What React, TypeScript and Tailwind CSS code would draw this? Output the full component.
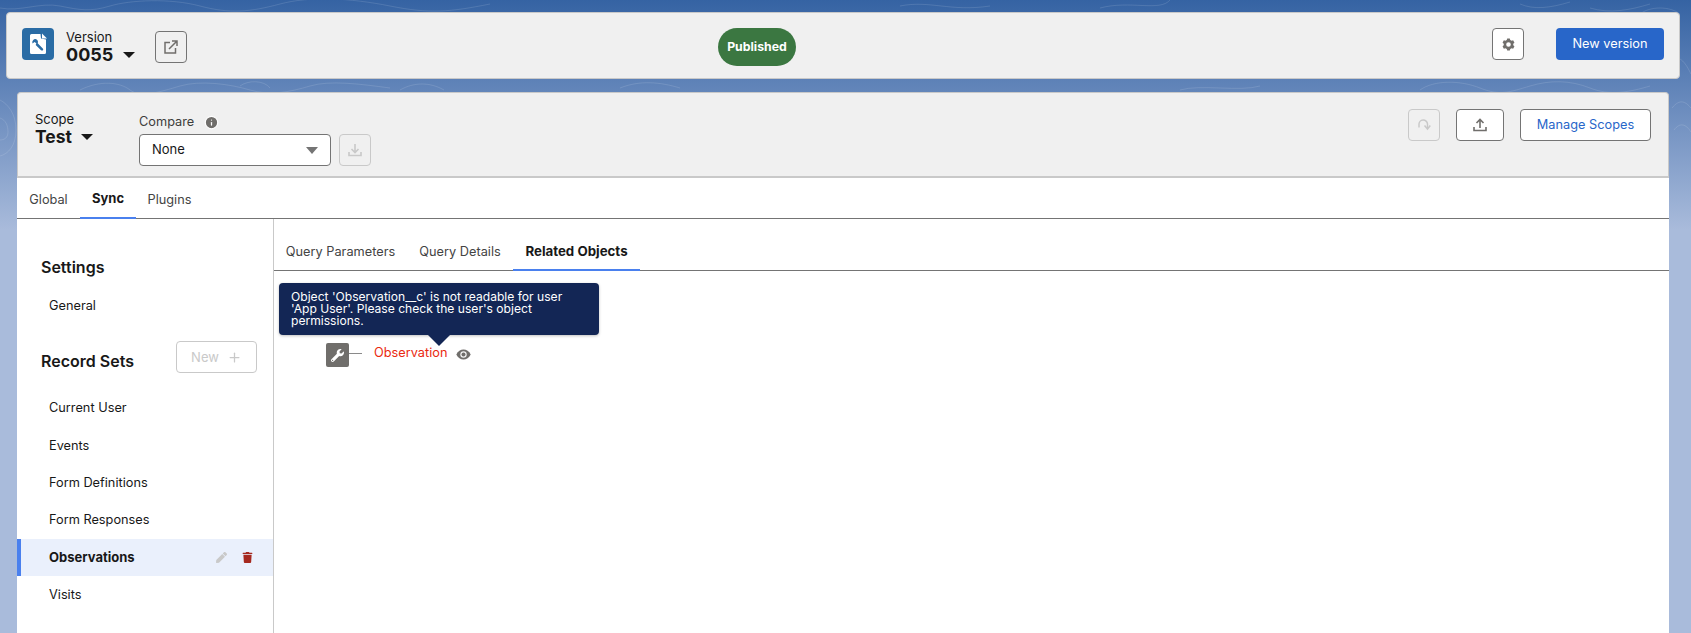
import React from "react";
import { Plus, Info } from "lucide-react";
import { FaWrench, FaPen, FaTrash } from "react-icons/fa";

const Caret = ({ c = "border-t-[#181818]", w = "border-x-[6px] border-t-[6px]" }: { c?: string; w?: string }) => (
  <span className={`inline-block w-0 h-0 border-x-transparent ${w} ${c}`} />
);

const Contours = () => (
  <svg className="absolute inset-0 pointer-events-none" width="1691" height="300" fill="none" stroke="#ffffff" strokeOpacity="0.12" strokeWidth="1">
    <path d="M0 8c20 4 40-6 60-2s30 6 50 0 60-8 90 0 50 6 80-2 70-6 110 2 60 6 100-2" />
    <path d="M80 90c20-10 40-8 50 0s30 2 50-4 50-2 70 4 40 2 60-4 50-2 80 2" />
    <path d="M240 86c8-6 24-6 30 2M400 90c14-8 30-8 44 0M620 88c20-8 40-6 60 0" />
    <path d="M1420 90c14-10 40-10 60-2s30 4 50-2 40-6 60 2 40 4 60-2" />
    <path d="M1520 4c14 6 30 4 50-2M1590 8c20 6 40 2 60-4M1640 14c10-8 30-8 40 0" />
    <path d="M1672 60c8-6 14 4 19 14M1672 108c8-10 14-6 19 0M1674 130c6-8 12-6 17 2" />
    <path d="M0 100c8 4 16 14 16 30s-8 24-16 26M0 118c6 2 8 8 8 14s-4 8-8 8" />
    <path d="M1100 8c30-8 60 4 70-8M1180 90c20-6 60 2 80-4M900 6c30-6 50 6 90 0" />
  </svg>
);

const GearIcon = () => (
  <svg width="13" height="13" viewBox="0 0 14 14">
    <path fillRule="evenodd" fill="#706e6b" d="M5.600 0.500H8.400L8.900 2.200L10.300 3L12 2.500L13.400 5L12.100 6.200V7.800L13.400 9L12 11.500L10.300 11L8.900 11.800L8.400 13.500H5.600L5.100 11.800L3.700 11L2 11.500L0.600 9L1.900 7.800V6.200L0.600 5L2 2.500L3.700 3L5.100 2.200ZM7 4.500A2.500 2.500 0 1 0 7 9.500A2.500 2.500 0 1 0 7 4.500Z" />
  </svg>
);

const RedoIcon = () => (
  <svg width="14" height="14" viewBox="0 0 14 14" fill="none" stroke="#c9c9c9" strokeWidth="1.500">
    <path d="M2 9.500V6.500A4 4 0 0 1 10.500 6V10" />
    <path d="M7.500 7.500L10.500 11L13.300 7.500" />
  </svg>
);

const TrayArrow = ({ color, up }: { color: string; up: boolean }) => (
  <svg width="14" height="14" viewBox="0 0 14 14" fill="none" stroke={color} strokeWidth="1.600">
    <path d="M1 9V12.500H13V9" />
    {up ? <path d="M7 10V1.500M3.500 5L7 1.500L10.500 5" /> : <path d="M7 1V9.500M3.500 6L7 9.500L10.500 6" />}
  </svg>
);

const OpenIcon = () => (
  <svg width="14" height="14" viewBox="0 0 14 14" fill="none" stroke="#706e6b" strokeWidth="1.500">
    <path d="M6 2.500H1V13H11.500V8" />
    <path d="M5 9L12.500 1.500M8 1H13V6" />
  </svg>
);

const EyeIcon = () => (
  <svg width="15" height="11" viewBox="0 0 15 11" className="ml-[9px] mt-[6px]">
    <path d="M0.300 5.500C2 2 4.500 0.500 7.500 0.500S13 2 14.700 5.500C13 9 10.500 10.500 7.500 10.500S2 9 0.300 5.500Z" fill="#706e6b" />
    <circle cx="7.500" cy="5.500" r="3.200" fill="#f3f3f3" />
    <circle cx="7.500" cy="5.500" r="2" fill="#706e6b" />
  </svg>
);

const rows = ["Current User", "Events", "Form Definitions", "Form Responses", "Observations", "Visits"];

export default function App() {
  return (
    <div className="relative h-[633px] w-[1691px] overflow-hidden bg-gradient-to-b from-[#3563a3] to-[#a9bbdb] bg-[length:100%_230px] bg-no-repeat [background-color:#a9bbdb] text-[#181818] [font-family:Inter,'Liberation_Sans',sans-serif]">
      <Contours />
      <div className="relative flex flex-col pt-[12px]">
        {/* Header card */}
        <header className="ml-[6px] flex h-[67px] w-[1674px] items-start rounded-[4px] border border-[#c9c9c9] bg-[#f0f0f0] pt-[15px]">
          <div className="ml-[15px] flex h-8 w-8 items-center justify-center rounded-[4px] bg-[#2a6ca5]">
            <svg width="24" height="24" viewBox="0 0 24 24">
              <path d="M4 3.500A1.500 1.500 0 0 1 5.500 2H14.500L15 6.500L20 7.500V20.500A1.500 1.500 0 0 1 18.500 22H5.500A1.500 1.500 0 0 1 4 20.500Z" fill="#fff" />
              <path d="M16 1.500L21 6.500H16Z" fill="#fff" />
              <path d="M10.200 7.200A3.200 3.200 0 0 0 6.500 11.500L8.500 10L10.300 11.300L9.700 13.100L15 18.200C16.400 19.400 18 17.800 16.800 16.400L11.700 11.200A3.200 3.200 0 0 0 10.200 7.200Z" fill="#2a6ca5" />
            </svg>
          </div>
          <div className="ml-3 flex w-[89px] flex-col">
            <span className="text-[13px] leading-[16px] mt-[1px]">Version</span>
            <span className="flex items-center gap-[10px] text-[18px] font-bold leading-[19px]">
              0055 <Caret />
            </span>
          </div>
          <button className="mt-[3px] flex h-8 w-8 items-center justify-center rounded-[4px] border border-[#747474] bg-[#f0f0f0]">
            <OpenIcon />
          </button>
          <div className="ml-[531px] mt-0 flex h-[38px] w-[78px] items-center justify-center rounded-full bg-[#3b7741] text-[12.3px] font-bold text-white">
            Published
          </div>
          <button className="ml-[696px] flex h-8 w-8 items-center justify-center rounded-[4px] border border-[#747474] bg-white">
            <GearIcon />
          </button>
          <button className="ml-8 flex h-8 w-[108px] items-center justify-center rounded-[4px] bg-[#2866c9] text-[12.75px] text-white">
            New version
          </button>
        </header>

        {/* Scope card */}
        <section className="ml-[17px] mt-[13px] flex h-[86px] w-[1652px] items-start rounded-t-[4px] border border-[#c9c9c9] border-b-2 bg-[#f0f0f0]">
          <div className="ml-[17px] mt-[18px] flex w-[104px] flex-col">
            <span className="text-[13px] leading-[16px]">Scope</span>
            <span className="flex items-center gap-[9px] text-[17.5px] font-bold leading-[19px]">
              Test <Caret />
            </span>
          </div>
          <div className="mt-[21px] flex flex-col">
            <span className="flex items-center gap-[10px] text-[12.75px] leading-[16px] text-[#3e3e3c]">
              Compare <Info size={15} color="#fff" fill="#706e6b" />
            </span>
            <div className="mt-1 flex items-center gap-2">
              <div className="flex h-8 w-[192px] items-center justify-between rounded-[4px] border border-[#747474] bg-white pl-3 pr-3 text-[13px]">
                None <Caret c="border-t-[#747474]" w="border-x-[6px] border-t-[7px]" />
              </div>
              <button className="flex h-8 w-8 items-center justify-center rounded-[4px] border border-[#c9c9c9]">
                <TrayArrow color="#c9c9c9" up={false} />
              </button>
            </div>
          </div>
          <div className="ml-auto mr-[17px] mt-4 flex gap-4">
            <button className="flex h-8 w-8 items-center justify-center rounded-[4px] border border-[#c9c9c9]">
              <RedoIcon />
            </button>
            <button className="flex h-8 w-12 items-center justify-center rounded-[4px] border border-[#747474] bg-white">
              <TrayArrow color="#706e6b" up />
            </button>
            <button className="flex h-8 w-[131px] items-center justify-center rounded-[4px] border border-[#747474] bg-white text-[12.75px] text-[#2866c9]">
              Manage Scopes
            </button>
          </div>
        </section>

        {/* White content */}
        <main className="ml-[17px] flex h-[455px] w-[1652px] flex-col bg-white">
          <nav className="flex h-[41px] shrink-0 items-stretch border-b border-[#747474] pt-[3px] text-[12.75px]">
            <span className="flex w-[63px] items-center justify-center text-[#444]">Global</span>
            <span className="flex w-[56px] items-center justify-center border-b-2 border-[#4a80ee] -mb-px text-[13px] font-bold">Sync</span>
            <span className="flex w-[67px] items-center justify-center text-[#444]">Plugins</span>
          </nav>
          <div className="flex min-h-0 flex-1">
            <aside className="flex w-[257px] shrink-0 flex-col border-r border-[#c9c9c9]">
              <h2 className="ml-[24px] mt-[38px] text-[16px] font-semibold leading-5">Settings</h2>
              <div className="ml-[32px] mt-[21px] text-[12.75px] leading-4">General</div>
              <div className="mt-[27px] flex items-start justify-between pl-[24px] pr-[16px]">
                <h2 className="mt-[10px] text-[16px] font-semibold leading-5">Record Sets</h2>
                <button className="flex h-8 w-[81px] items-center justify-center gap-2 rounded-[4px] border border-[#c9c9c9] text-[13px] text-[#c9c9c9]">
                  <span className="mt-[1px]">New</span> <Plus size={15} />
                </button>
              </div>
              <ul className="mt-[16px] flex flex-col">
                {rows.map((r) => {
                  const active = r === "Observations";
                  return (
                    <li
                      key={r}
                      className={`flex h-[37.4px] items-center pl-[32px] pr-[20px] ${active ? "border-l-4 border-[#4a80ee] !pl-[28px] bg-[#eaf0fc] text-[13px] font-bold" : "text-[12.75px]"}`}
                    >
                      {r}
                      {active && (
                        <span className="ml-auto flex items-center gap-[15px]">
                          <FaPen size={11} color="#c9c9c9" />
                          <FaTrash size={11} color="#a5281f" />
                        </span>
                      )}
                    </li>
                  );
                })}
              </ul>
            </aside>
            <div className="flex flex-1 flex-col">
              <nav className="flex h-[52px] shrink-0 items-stretch border-b border-[#747474] pt-[15px] text-[12.75px]">
                <span className="flex w-[133px] items-center justify-center text-[#444]">Query Parameters</span>
                <span className="flex w-[106px] items-center justify-center text-[#444]">Query Details</span>
                <span className="flex w-[127px] items-center justify-center border-b-2 border-[#4a80ee] -mb-px text-[13.3px] font-bold">Related Objects</span>
              </nav>
              <div className="relative flex flex-1 items-start pl-[52px] pt-[72px]">
                <div className="absolute left-[5px] top-[12px] w-[320px] rounded-[4px] bg-[#132655] px-3 py-2 text-[12.1px] leading-[12px] text-white shadow-[0_1px_3px_rgba(0,0,0,0.25)]">
                  Object 'Observation__c' is not readable for user 'App User'. Please check the user's object permissions.
                  <span className="absolute left-[149px] top-full h-0 w-0 border-x-[11px] border-t-[11px] border-x-transparent border-t-[#132655]" />
                </div>
                <div className="flex h-[24px] w-[23px] items-center justify-center rounded-[2px] bg-[#706e6b]">
                  <FaWrench size={13} color="#fff" className="-scale-x-100 rotate-90" />
                </div>
                <span className="mt-[10px] h-[1px] w-[13px] bg-[#8a8a8a]" />
                <span className="ml-[12px] text-[12.75px] leading-[20px] text-[#ea2a10]">Observation</span>
                <EyeIcon />
              </div>
            </div>
          </div>
        </main>
      </div>
    </div>
  );
}
